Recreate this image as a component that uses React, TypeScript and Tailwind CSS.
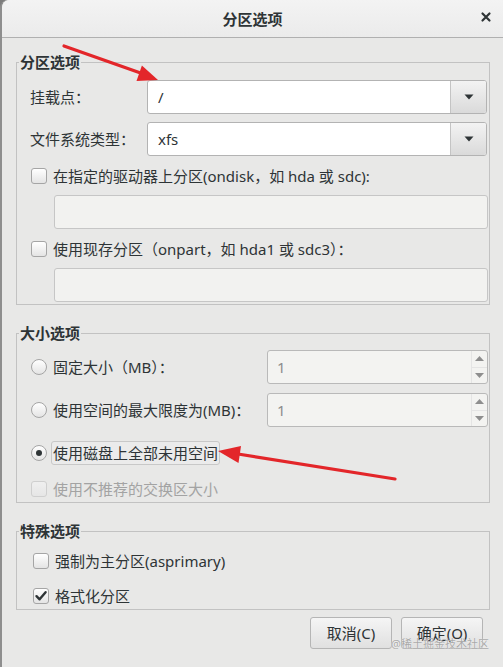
import React from "react";

const FONT = "font-['Noto_Sans','Noto_Sans_CJK_SC',sans-serif]";

function Check({ checked = false, disabled = false }: { checked?: boolean; disabled?: boolean }) {
  return (
    <span
      className={`w-[16px] h-[16px] rounded-[3px] border shrink-0 flex items-center justify-center bg-linear-to-b ${
        disabled ? "border-[#cfcfcf] from-[#efefef] to-[#e6e6e6]" : "border-[#a5a5a5] from-white to-[#e4e4e4]"
      }`}
    >
      {checked && (
        <svg width="14" height="14" viewBox="0 0 14 14">
          <path d="M2.5 7.2 L5.6 10.3 L11.6 3.2" fill="none" stroke="#2e3436" strokeWidth="2.4" strokeLinecap="round" strokeLinejoin="round" />
        </svg>
      )}
    </span>
  );
}

function Radio({ checked = false }: { checked?: boolean }) {
  return (
    <span className="w-[16px] h-[16px] rounded-full border border-[#a5a5a5] shrink-0 flex items-center justify-center bg-linear-to-b from-white to-[#e4e4e4]">
      {checked && <span className="w-[6px] h-[6px] rounded-full bg-[#2e3436]" />}
    </span>
  );
}

function Combo({ value }: { value: string }) {
  return (
    <div className="w-[340px] h-[34px] flex border border-[#b3b3b3] rounded-[3px] bg-white overflow-hidden">
      <div className="flex-1 flex items-center pl-[10px] text-[#2e3436]">{value}</div>
      <div className="w-[36px] flex items-center justify-center border-l border-[#c4c4c4] bg-linear-to-b from-[#f3f3f3] to-[#dadada]">
        <svg width="10" height="6" viewBox="0 0 10 6">
          <path d="M0.5 0.5 L9.5 0.5 L5 5.5 Z" fill="#2e3436" />
        </svg>
      </div>
    </div>
  );
}

function Entry() {
  return <div className="h-[34px] ml-[24px] border border-[#c6c6c6] rounded-[3px] bg-[#f2f2f0]" />;
}

function Spin() {
  return (
    <div className="ml-auto w-[221px] h-[34px] flex border border-[#b9b9b9] rounded-[3px] bg-[#f3f3f1] overflow-hidden">
      <div className="flex-1 flex items-center pl-[9px] text-[#8c8c8c]">1</div>
      <div className="w-[16px] flex flex-col border-l border-[#e4e4e4]">
        <div className="flex-1 flex items-center justify-center border-b border-[#e4e4e4]">
          <svg width="9" height="5" viewBox="0 0 9 5">
            <path d="M0 5 L9 5 L4.5 0 Z" fill="#8e8e8e" />
          </svg>
        </div>
        <div className="flex-1 flex items-center justify-center">
          <svg width="9" height="5" viewBox="0 0 9 5">
            <path d="M0 0 L9 0 L4.5 5 Z" fill="#8e8e8e" />
          </svg>
        </div>
      </div>
    </div>
  );
}

function Group({ title, className, innerClass, children }: { title: string; className: string; innerClass: string; children: React.ReactNode }) {
  return (
    <fieldset className={`border border-[#c2c2c2] ml-[14px] mr-[13px] ${className}`}>
      <legend className="ml-[2px] px-[1px] font-bold text-[15px] leading-[20px] text-[#2e3436]">{title}</legend>
      <div className={`pl-[13px] pr-[1px] ${innerClass}`}>{children}</div>
    </fieldset>
  );
}

function Btn({ label }: { label: string }) {
  return (
    <div className="w-[82px] h-[32px] flex items-center justify-center border border-[#b5b5b5] rounded-[3px] bg-linear-to-b from-[#f5f5f5] to-[#e0e0e0] text-[#2e3436]">
      {label}
    </div>
  );
}

export default function App() {
  return (
    <div className={`relative w-[503px] h-[667px] bg-[#7d7d7d] overflow-hidden ${FONT} text-[15px] leading-[20px] text-[#2e3436]`}>
      <div className="w-[503px] h-[667px] bg-[#e8e8e7] rounded-tl-[8px] border-l-[2px] border-[#8e8e8e]">
        {/* title bar */}
        <div className="h-[38px] border-b border-[#b0b0b0] rounded-tl-[8px] bg-linear-to-b from-[#f3f3f3] to-[#ebebeb] flex items-center relative">
          <div className="flex-1 text-center font-bold text-[15px]">分区选项</div>
          <div className="absolute right-[11px] top-[11px]">
            <svg width="12" height="12" viewBox="0 0 12 12">
              <path d="M2.5 2.5 L9.5 9.5 M9.5 2.5 L2.5 9.5" stroke="#2e3436" strokeWidth="2.2" strokeLinecap="round" />
            </svg>
          </div>
        </div>

        {/* group 1 */}
        <Group title="分区选项" className="mt-[14px]" innerClass="pt-[8px] pb-[2px]">
          <div className="flex items-center h-[34px]">
            <div className="w-[117px]">挂载点：</div>
            <Combo value="/" />
          </div>
          <div className="flex items-center h-[34px] mt-[8px]">
            <div className="w-[117px]">文件系统类型：</div>
            <Combo value="xfs" />
          </div>
          <div className="flex items-center h-[24px] mt-[8px]">
            <span className="ml-[1px]"><Check /></span>
            <span className="ml-[6px]">在指定的驱动器上分区(ondisk，如 hda 或 sdc):</span>
          </div>
          <div className="mt-[7px]"><Entry /></div>
          <div className="flex items-center h-[24px] mt-[8px]">
            <span className="ml-[1px]"><Check /></span>
            <span className="ml-[6px]">使用现存分区（onpart，如 hda1 或 sdc3）：</span>
          </div>
          <div className="mt-[7px]"><Entry /></div>
        </Group>

        {/* group 2 */}
        <Group title="大小选项" className="mt-[18px]" innerClass="pt-[7px] pb-[2px]">
          <div className="flex items-center h-[34px]">
            <span className="ml-[1px]"><Radio /></span>
            <span className="ml-[4px] px-[1px] border border-transparent">固定大小（MB）：</span>
            <Spin />
          </div>
          <div className="flex items-center h-[34px] mt-[9px]">
            <span className="ml-[1px]"><Radio /></span>
            <span className="ml-[4px] px-[1px] border border-transparent">使用空间的最大限度为(MB)：</span>
            <Spin />
          </div>
          <div className="flex items-center h-[24px] mt-[14px]">
            <span className="ml-[1px]"><Radio checked /></span>
            <span className="ml-[4px] px-[1px] h-[24px] flex items-center border border-[#c8c8c8] rounded-[3px] bg-[#ebebeb]">使用磁盘上全部未用空间</span>
          </div>
          <div className="flex items-center h-[22px] mt-[13px]">
            <span className="ml-[1px]"><Check disabled /></span>
            <span className="ml-[6px] text-[#a3a3a3]">使用不推荐的交换区大小</span>
          </div>
        </Group>

        {/* group 3 */}
        <Group title="特殊选项" className="mt-[18px]" innerClass="pt-[8px] pb-[1px]">
          <div className="flex items-center h-[24px]">
            <span className="ml-[3px]"><Check /></span>
            <span className="ml-[6px]">强制为主分区(asprimary)</span>
          </div>
          <div className="flex items-center h-[24px] mt-[11px]">
            <span className="ml-[3px]"><Check checked /></span>
            <span className="ml-[6px]">格式化分区</span>
          </div>
        </Group>

        <div className="flex justify-end gap-[9px] mt-[7px] pr-[20px]">
          <Btn label="取消(C)" />
          <Btn label="确定(O)" />
        </div>
      </div>

      {/* watermark */}
      <div className="absolute left-[391px] top-[636px] text-[11px] leading-[16px] text-[#a9a9a9] [text-shadow:0_0_1px_#ffffff]">@稀土掘金技术社区</div>

      {/* annotation arrows */}
      <svg className="absolute left-0 top-0 pointer-events-none" width="503" height="667" viewBox="0 0 503 667">
        <line x1="64" y1="46" x2="142" y2="73.5" stroke="#e3262a" strokeWidth="3.2" strokeLinecap="round" />
        <polygon points="158,80 136.5,81 141.9,65.5" fill="#e3262a" />
        <line x1="395" y1="479" x2="238" y2="454" stroke="#e3262a" strokeWidth="3.2" strokeLinecap="round" />
        <polygon points="218,451 241,446 238.5,463" fill="#e3262a" />
      </svg>
    </div>
  );
}
